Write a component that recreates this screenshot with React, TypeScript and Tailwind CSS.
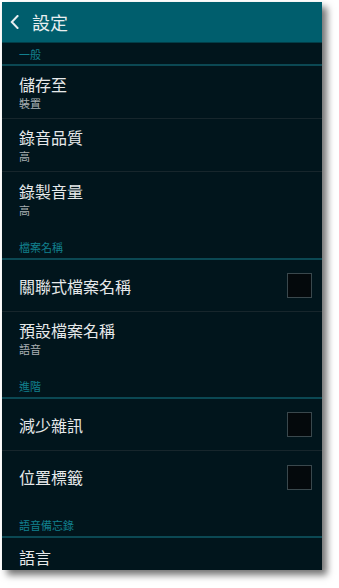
type Item = {
  title: string;
  summary?: string;
  checkbox?: boolean;
  last?: boolean;
  top?: boolean;
};

type Category = {
  name: string;
  first?: boolean;
  items: Item[];
};

const categories: Category[] = [
  {
    name: '一般',
    first: true,
    items: [
      { title: '儲存至', summary: '裝置' },
      { title: '錄音品質', summary: '高' },
      { title: '錄製音量', summary: '高', last: true },
    ],
  },
  {
    name: '檔案名稱',
    items: [
      { title: '關聯式檔案名稱', checkbox: true },
      { title: '預設檔案名稱', summary: '語音', last: true },
    ],
  },
  {
    name: '進階',
    items: [
      { title: '減少雜訊', checkbox: true },
      { title: '位置標籤', checkbox: true, last: true },
    ],
  },
  {
    name: '語音備忘錄',
    // the row is cut by the bottom of the screen, so its title sits at the top
    items: [{ title: '語言', last: true, top: true }],
  },
];

function PrefRow({ item, tall }: { item: Item; tall?: boolean }) {
  return (
    <div
      className={`flex justify-between pl-[17px] pr-[10px] ${tall ? 'h-[53px]' : 'h-[52px]'} ${
        item.top ? 'items-start pt-[9px]' : 'items-center'
      } ${item.last ? '' : 'border-b border-[#17262c]'}`}
    >
      <div className="flex flex-col">
        <span className="text-[16px] leading-[20px] text-[#e6e9ea]">{item.title}</span>
        {item.summary && (
          <span className="mt-[2px] text-[11px] leading-[14px] text-[#a9b0b3]">{item.summary}</span>
        )}
      </div>
      {item.checkbox && (
        <div className="h-[25px] w-[25px] border border-[#3a484d] bg-[#04090c]" />
      )}
    </div>
  );
}

export default function App() {
  return (
    <div className="h-[588px] w-[339px] bg-white pl-[2px] pt-[2px]">
      <div
        className="h-[568px] w-[320px] overflow-hidden bg-[#01151c] shadow-[5px_5px_7px_rgba(0,0,0,0.55)]"
        style={{ fontFamily: '"Noto Sans CJK TC", "Noto Sans", sans-serif' }}
      >
        <div className="flex h-[41px] items-center border-b border-[#023e48] bg-[#005e6d] pl-[8px]">
          <svg width="9" height="14" viewBox="0 0 9 14" className="shrink-0">
            <polyline
              points="7.5,1 1.8,7 7.5,13"
              fill="none"
              stroke="#e9eef0"
              strokeWidth="2"
              strokeLinecap="square"
            />
          </svg>
          <span className="ml-[13px] text-[18px] leading-none text-[#e9eef0]">設定</span>
        </div>
        {categories.map(cat => (
          <div key={cat.name}>
            <div
              className={`flex items-end border-b-2 border-[#0b4853] pl-[17px] ${
                cat.first ? 'h-[23px] pb-[3px]' : 'h-[35px] pb-[4px]'
              }`}
            >
              <span className="text-[11px] leading-[14px] text-[#12808e]">{cat.name}</span>
            </div>
            {cat.items.map(item => (
              <PrefRow key={item.title} item={item} tall={cat.first} />
            ))}
          </div>
        ))}
      </div>
    </div>
  );
}
